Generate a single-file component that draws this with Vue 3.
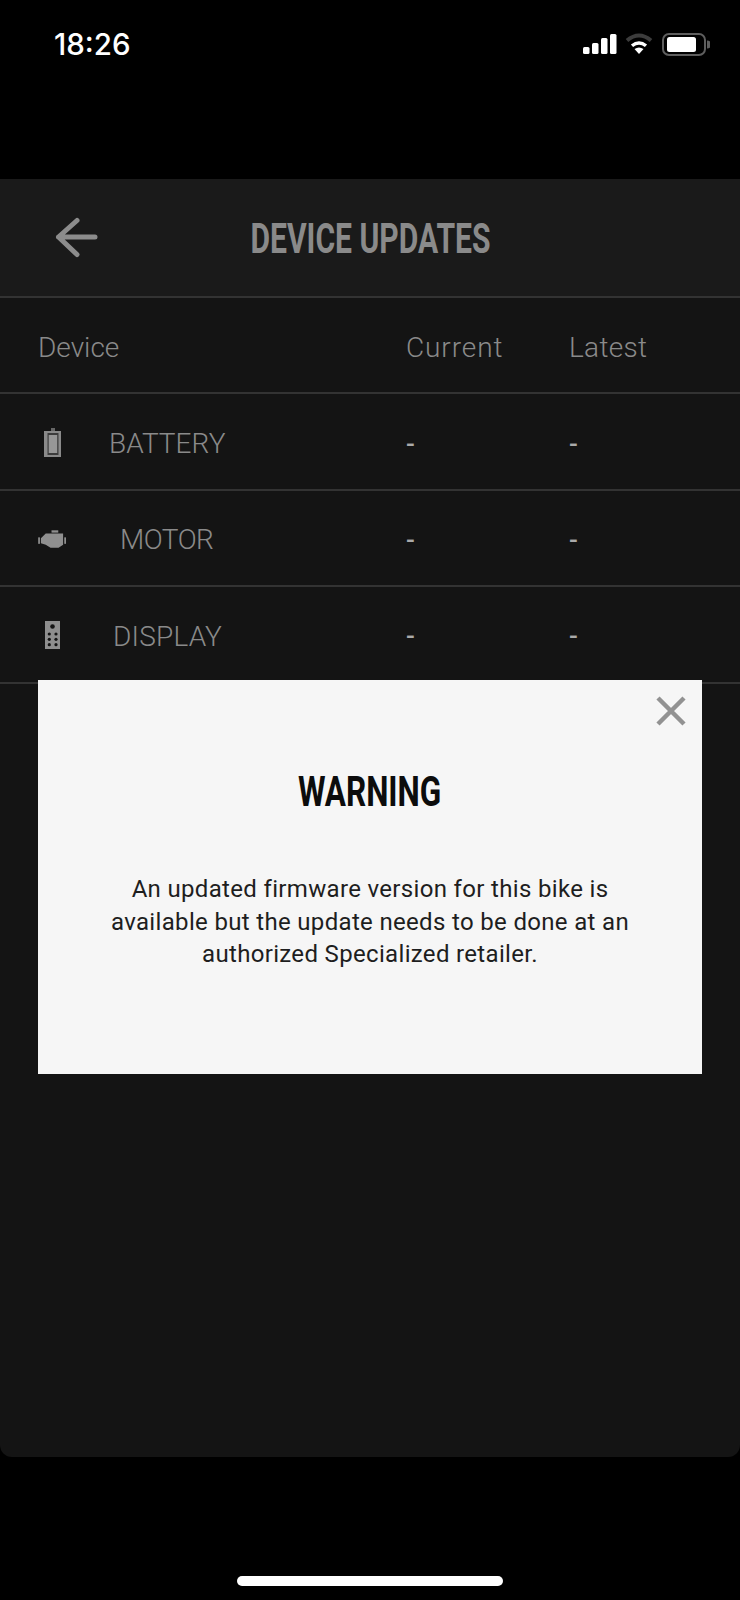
<script setup>
const rows = [
  { name: 'BATTERY', icon: 'battery', cls: 'battery' },
  { name: 'MOTOR', icon: 'motor', cls: 'motor' },
  { name: 'DISPLAY', icon: 'display', cls: 'display' },
]
const keys = [
  [4.3, 13], [11, 13], [4.3, 18.3], [11, 18.3], [4.3, 23.7], [11, 23.7],
]
</script>

<template>
  <div class="phone">
    <div class="status">
      <span class="time">18:26</span>
      <div class="status-icons">
        <svg class="signal" width="34" height="20" viewBox="0 0 34 20">
          <rect x="0" y="13" width="6.5" height="7" rx="1.5" fill="#fff" />
          <rect x="9" y="9" width="6.5" height="11" rx="1.5" fill="#fff" />
          <rect x="18" y="4" width="6.5" height="16" rx="1.5" fill="#fff" />
          <rect x="27" y="0" width="6.5" height="20" rx="1.5" fill="#fff" />
        </svg>
        <svg class="wifi" width="28" height="21" viewBox="0 0 28 21">
          <path d="M2 7.5 Q14 -2.5 26 7.5" fill="none" stroke="#3c3c3c" stroke-width="4" />
          <path d="M7 12.8 Q14 7 21 12.8" fill="none" stroke="#fff" stroke-width="3.4" />
          <path d="M14 21 L9.5 16 Q14 13 18.5 16 Z" fill="#fff" />
        </svg>
        <svg class="batt" width="48" height="23" viewBox="0 0 48 23">
          <rect x="1" y="1" width="42" height="21" rx="6" fill="none" stroke="#5e5e5e" stroke-width="2" />
          <rect x="5" y="4" width="29" height="15" rx="2.5" fill="#fff" />
          <path d="M45 7.5 A4 4 0 0 1 45 15.5 Z" fill="#5e5e5e" />
        </svg>
      </div>
    </div>

    <div class="panel">
      <header class="topbar">
        <svg class="back" width="44" height="44" viewBox="0 0 44 44">
          <path d="M23 5.5 L4.5 22 L23 39.5 M4.5 22 H41" fill="none" stroke="#8c8c8c" stroke-width="5" stroke-linecap="round" stroke-linejoin="round" />
        </svg>
        <h1>DEVICE UPDATES</h1>
      </header>

      <div class="row head">
        <span class="col-device">Device</span>
        <span class="col-current">Current</span>
        <span class="col-latest">Latest</span>
      </div>

      <div v-for="r in rows" :key="r.name" class="row" :class="r.cls">
        <span class="col-device dev">
          <span class="ico">
            <svg v-if="r.icon === 'battery'" width="17" height="29" viewBox="0 0 17 29">
              <rect x="7" y="0" width="4" height="3" fill="#666" />
              <rect x="0" y="3" width="17" height="26" fill="#8a8a8a" />
              <rect x="3.5" y="5" width="11" height="22" fill="#3c3c3c" />
              <rect x="4.7" y="7" width="8.5" height="18" fill="#979797" />
            </svg>
            <svg v-else-if="r.icon === 'motor'" width="29" height="18" viewBox="0 0 29 18">
              <rect x="14" y="0" width="7" height="2.4" fill="#8f8f8f" />
              <path d="M3 8.3 L8 3.3 H26 V15 L21.3 18 H13 L8 15 L3 13.3 Z" fill="#8f8f8f" />
              <rect x="0.2" y="7.3" width="1.8" height="6.7" fill="#8f8f8f" />
              <rect x="27.2" y="7.3" width="1.8" height="6.7" fill="#8f8f8f" />
            </svg>
            <svg v-else width="15" height="28" viewBox="0 0 15 28">
              <rect width="15" height="28" fill="#8e8e8e" />
              <circle cx="7.5" cy="5.5" r="2.3" fill="#141414" />
              <circle v-for="(k, i) in keys" :key="i" :cx="k[0]" :cy="k[1]" r="1.6" fill="#141414" />
            </svg>
          </span>
          <span class="dev-name">{{ r.name }}</span>
        </span>
        <span class="col-current dash">-</span>
        <span class="col-latest dash">-</span>
      </div>

      <section class="modal">
        <svg class="close" width="30" height="30" viewBox="0 0 30 30">
          <path d="M2 2 L28 28 M28 2 L2 28" stroke="#929292" stroke-width="4.5" fill="none" />
        </svg>
        <h2><span>WARNING</span></h2>
        <p>An updated firmware version for this bike is<br />available but the update needs to be done at an<br />authorized Specialized retailer.</p>
      </section>
    </div>

    <div class="home-area"><div class="home-bar"></div></div>
  </div>
</template>

<style>
html, body { margin: 0; background: #000; }
</style>

<style scoped>
.phone {
  width: 740px;
  height: 1600px;
  background: #000;
  display: flex;
  flex-direction: column;
  font-family: "Roboto", "Liberation Sans", sans-serif;
  overflow: hidden;
}
.status {
  height: 179px;
  box-sizing: border-box;
  padding: 27px 30px 0 54px;
  display: flex;
  justify-content: space-between;
  align-items: flex-start;
}
.time {
  color: #fff;
  font-size: 29.5px;
  font-weight: 500;
  line-height: 34px;
  font-family: "Inter", "Roboto", sans-serif;
}
.status-icons {
  display: flex;
  align-items: flex-start;
  padding-top: 6px;
}
.signal { margin-top: 1px; }
.wifi { margin-left: 8px; }
.batt { margin-left: 9px; }
.panel {
  position: relative;
  height: 1278px;
  background: #141414;
  border-radius: 0 0 12px 12px;
}
.topbar {
  height: 119px;
  box-sizing: border-box;
  background: #1a1a1a;
  border-bottom: 2px solid #333;
  display: flex;
  align-items: center;
  justify-content: center;
  position: relative;
}
.back {
  position: absolute;
  left: 54px;
  top: 36px;
}
.topbar h1 {
  margin: 0;
  color: #8a8a8a;
  font-size: 43px;
  font-weight: 700;
  line-height: 44px;
  white-space: nowrap;
  transform: scaleX(0.7);
}
.row {
  height: 96.4px;
  box-sizing: border-box;
  border-bottom: 2px solid #333;
  display: grid;
  grid-template-columns: 368px 163px 1fr;
  padding: 4px 0 0 38px;
  align-items: center;
  color: #8a8a8a;
  font-size: 28px;
  font-weight: 300;
}
.head .col-current { letter-spacing: 0.9px; }
.head .col-latest { letter-spacing: 0.3px; }
.dev {
  display: flex;
  align-items: center;
}
.ico {
  width: 28px;
  display: flex;
  justify-content: center;
  flex: none;
  position: relative;
  top: -1px;
}
.dev-name { margin-left: 43px; }
.motor .dev-name { margin-left: 54px; letter-spacing: -0.5px; }
.display .dev-name { margin-left: 47px; letter-spacing: 0.2px; }
.dash {
  color: #aaa;
  font-size: 26px;
  font-weight: 500;
}
.modal {
  position: absolute;
  left: 38px;
  top: 501px;
  width: 664px;
  height: 394px;
  background: #f6f6f6;
  text-align: center;
}
.close {
  position: absolute;
  right: 16px;
  top: 16px;
}
.modal h2 {
  margin: 89px 0 0;
  color: #0c0c0c;
  font-size: 42px;
  line-height: 46px;
  font-weight: 700;
}
.modal h2 span {
  display: inline-block;
  transform: scaleX(0.75);
}
.modal p {
  margin: 58px 0 0;
  color: #1e1e1e;
  font-size: 24px;
  line-height: 32.5px;
  font-weight: 400;
  letter-spacing: 0.33px;
}
.home-area {
  flex: 1;
  display: flex;
  justify-content: center;
  padding-top: 119px;
}
.home-bar {
  width: 266px;
  height: 10px;
  border-radius: 5px;
  background: #fff;
}
</style>
